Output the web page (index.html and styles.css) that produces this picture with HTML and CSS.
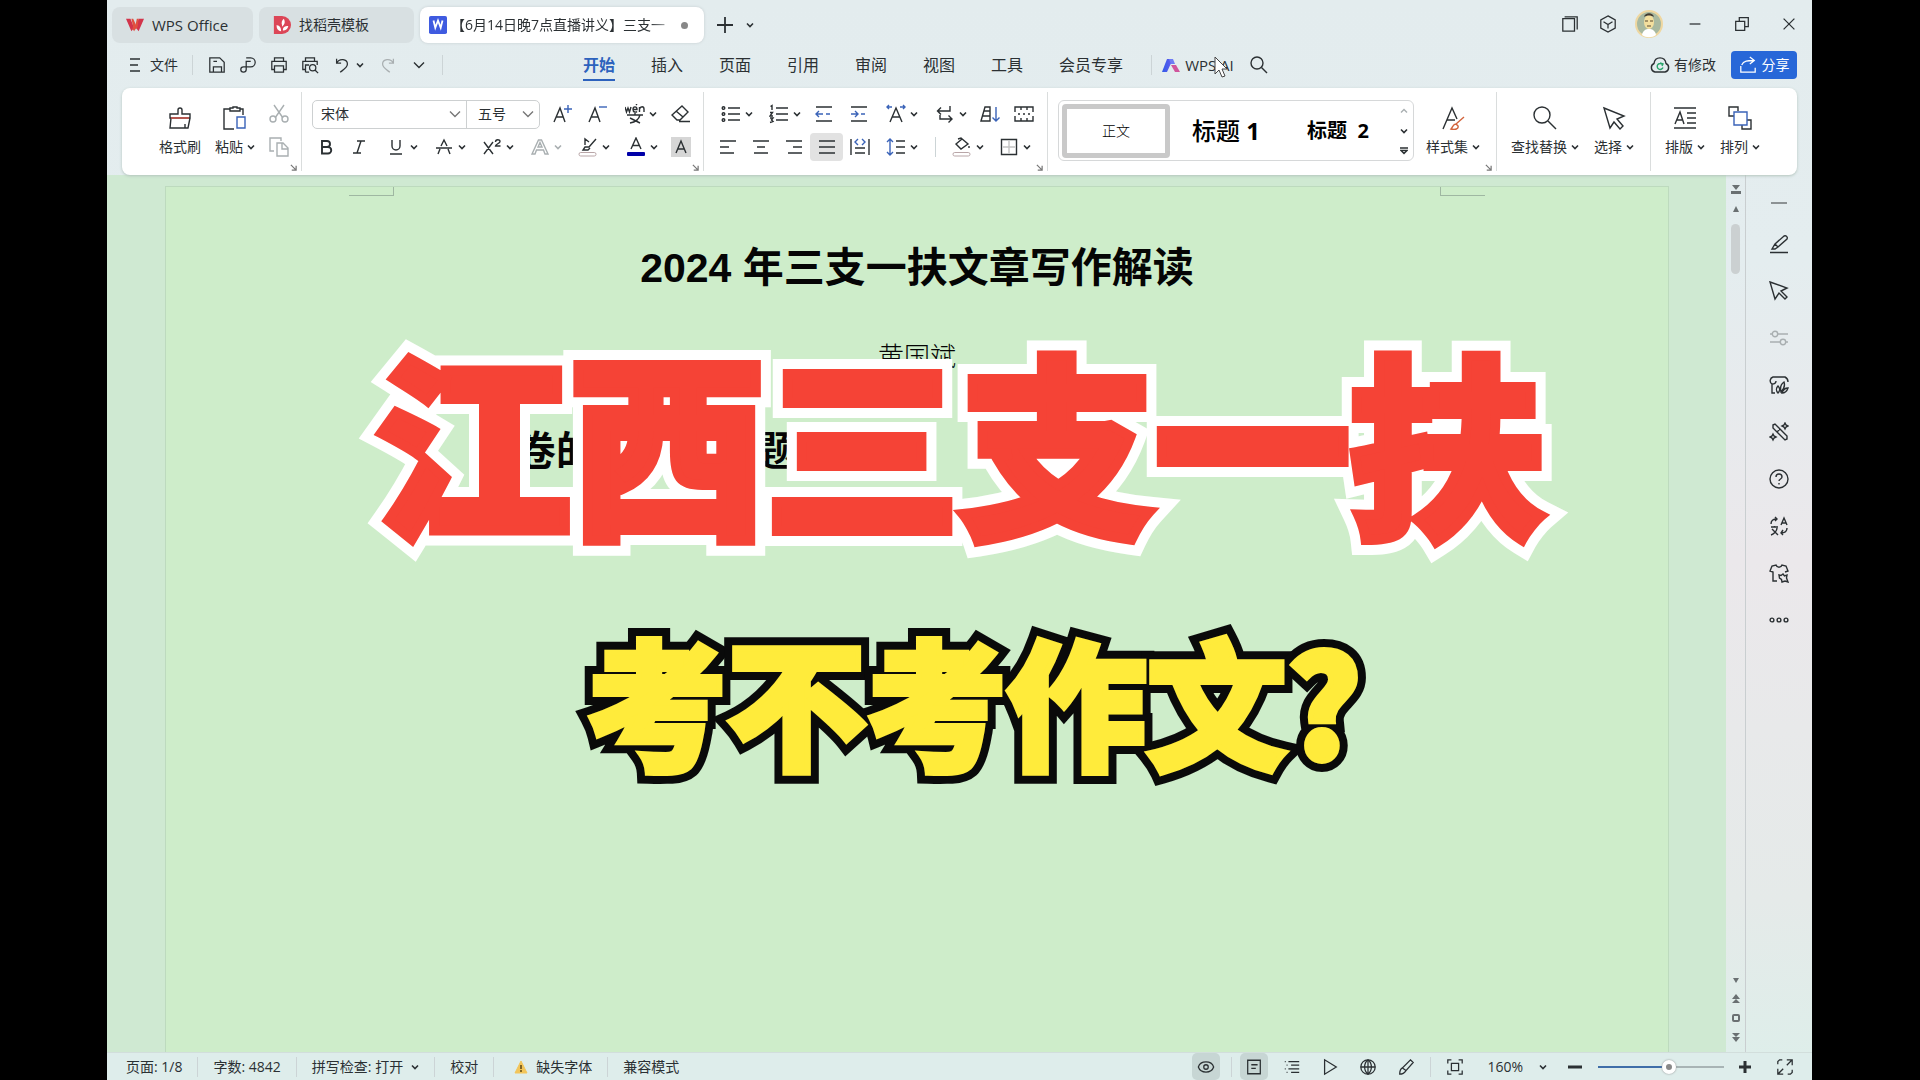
FILE: index.html
```
<!DOCTYPE html>
<html lang="zh-CN">
<head>
<meta charset="utf-8">
<title>WPS Office</title>
<link rel="stylesheet" href="styles.css">
</head>
<body>
<svg class="sprite" aria-hidden="true">
  <symbol id="chev" viewBox="0 0 8 8"><path d="M1 2.5l3 3 3-3" stroke-width="1.6"/></symbol>
  <symbol id="chev-l" viewBox="0 0 12 12"><path d="M1 3.5l5 5 5-5"/></symbol>
  <symbol id="menu" viewBox="0 0 20 20"><path d="M5 4h10M5 10h8M5 16h10"/></symbol>
  <symbol id="save" viewBox="0 0 20 20"><path d="M2 2h11l5 5v11H2zM6 18v-6h9v6M6 6h4"/></symbol>
  <symbol id="pdf" viewBox="0 0 20 20"><path d="M8 2h5a5 5 0 0 1 0 10H5a3 3 0 1 0 3 3V6h5"/></symbol>
  <symbol id="print" viewBox="0 0 20 20"><path d="M5 6V2h10v4M5 15H2V6h16v9h-3M5 11h10v7H5z"/></symbol>
  <symbol id="preview" viewBox="0 0 20 20"><path d="M5 6V2h10v4M5 15H2V6h16v4M5 18v-8h4M5 18h4"/><circle cx="13" cy="13" r="3.5"/><path d="M15.500 15.500L19 19"/></symbol>
  <symbol id="undo" viewBox="0 0 20 20"><path d="M4 3v5h5M4 8c3-6 12-5 12 1 0 4-4 6-8 9"/></symbol>
  <symbol id="redo" viewBox="0 0 20 20"><path d="M16 3v5h-5M16 8C13 2 4 3 4 9c0 4 4 6 8 9"/></symbol>
  <symbol id="search" viewBox="0 0 20 20"><circle cx="8" cy="8" r="6"/><path d="M12.500 12.500L18 18"/></symbol>
  <symbol id="brush" viewBox="0 0 24 24"><path d="M10 8V4a2 2 0 0 1 4 0v4h8v4H2V8zM3 12L2 22h18l2-10M17 22v-4"/><path d="M3 12h18" class="c-red"/></symbol>
  <symbol id="paste" viewBox="0 0 24 24"><path d="M7 3H1v20h10M17 3h3v6M7 5V2h3V1h4v1h3v3z"/><path d="M14 11h8v11h-8z" class="c-blue"/></symbol>
  <symbol id="cut" viewBox="0 0 20 20"><path d="M5 1l9 13M15 1L6 14"/><circle cx="4" cy="15" r="3"/><circle cx="16" cy="15" r="3"/></symbol>
  <symbol id="copy" viewBox="0 0 20 20"><path d="M5 14H1V1h11v3M8 6h6l5 5v8H8zM13 6v6h6"/></symbol>
  <symbol id="launch" viewBox="0 0 8 8"><path d="M1 1l6 6M7 2v5H2"/></symbol>
  <symbol id="a-plus" viewBox="0 0 20 20"><path d="M2 18L8 4l5 14M4 13h7"/><path d="M12 5h8M16 1v8" class="c-blue"/></symbol>
  <symbol id="a-minus" viewBox="0 0 20 20"><path d="M2 18L8 4l5 14M4 13h7"/><path d="M12 3h8" class="c-blue"/></symbol>
  <symbol id="wen" viewBox="0 0 20 20"><path d="M0 3l1.500 5L3 4l1.500 4L6 3M8 5.500h4C12 2 8 2 8 5.500c0 3 3 3 4 2M11 1l1-1M14.500 8V3M14.500 5c1-3 4.500-3 4.500 0v3M2 11h16M10 9v2M5 14l10 5M15 11c-1 4-4 7-10 8"/></symbol>
  <symbol id="eraser" viewBox="0 0 20 20"><path d="M11 2l6 6-8 8H6l-5-5zM5 7l7 6M8 17.500h11"/></symbol>
  <symbol id="bold" viewBox="0 0 20 20"><path d="M6 4h5a3 3 0 0 1 0 6H6zM6 10h6a3 3 0 0 1 0 6.500H6z" stroke-width="1.900"/></symbol>
  <symbol id="italic" viewBox="0 0 20 20"><path d="M8 4h8M4 16h8M12 4L8 16"/></symbol>
  <symbol id="under" viewBox="0 0 20 20"><path d="M6 3v6a4 4 0 0 0 8 0V3M4 17h12"/></symbol>
  <symbol id="strike" viewBox="0 0 20 20"><path d="M7 9l3-6 3 6M2 11h16M6 12l-2 5M14 12l2 5"/></symbol>
  <symbol id="sup" viewBox="0 0 20 20"><path d="M2 5l9 12M11 5L2 17M13.500 5c0-3 4.500-3 4.500-.5 0 2-4.500 2.500-4.500 4.500H18.500"/></symbol>
  <symbol id="a-out" viewBox="0 0 20 20"><path d="M2 17L8.500 3h3L18 17h-3l-1.500-4h-7L5 17zM8 10h4l-2-4.500z"/></symbol>
  <symbol id="hilite" viewBox="0 0 20 20"><path d="M18 2l-7 8H7L5 13h5l2-2M7 8V2l4 3"/><rect x="1" y="15.500" width="17" height="3.500" rx="1.700" class="c-pink"/></symbol>
  <symbol id="a-color" viewBox="0 0 20 20"><path d="M5 12L10 1l5 11M7 8.500h6"/><rect x="1" y="15" width="18" height="4" rx="1" class="f-navy"/></symbol>
  <symbol id="a-bg" viewBox="0 0 20 20"><rect width="20" height="20" class="f-grey"/><path d="M5 16l5-12 5 12M7 12h6"/></symbol>
  <symbol id="bullets" viewBox="0 0 20 20"><path d="M7 4h12M7 10h12M7 16h12"/><circle cx="2.500" cy="4" r="1.300"/><circle cx="2.500" cy="10" r="1.300"/><circle cx="2.500" cy="16" r="1.300"/></symbol>
  <symbol id="numbers" viewBox="0 0 20 20"><path d="M7 4h12M7 10h12M7 16h12M1.500 2.500L3 1.500V6M1 8.500h2.500L1 12h3M1 14h3l-1.500 2L4 17.500 1 18.500"/></symbol>
  <symbol id="outdent" viewBox="0 0 20 20"><path d="M2 3h16M2 17h16"/><path d="M9 10H2M5 7l-3 3 3 3M12 10h4" class="c-blue"/></symbol>
  <symbol id="indent" viewBox="0 0 20 20"><path d="M2 3h16M2 17h16"/><path d="M2 10h7M6 7l3 3-3 3M12 10h4" class="c-blue"/></symbol>
  <symbol id="a-wide" viewBox="0 0 20 20"><path d="M4 18l6-14 6 14M6 13h8"/><path d="M6 3H1M3 1L1 3l2 2M14 3h5M17 1l2 2-2 2" class="c-blue"/></symbol>
  <symbol id="wrap" viewBox="0 0 20 20"><path d="M15 2v5H3M6 3.500L2.500 7 6 10.500M5 11v4h12M13.500 11.500L17 15l-3.500 3.500"/></symbol>
  <symbol id="sort" viewBox="0 0 20 20"><path d="M1 17L5 3h5v14zM4 7h6M3 12h7"/><path d="M16 3v14M12.500 13.500L16 17l3.500-3.500" class="c-blue"/></symbol>
  <symbol id="cells" viewBox="0 0 20 20"><path d="M1 8V3h18v5M1 12v5h18v-5M7 3v3M13 3v3M7 17v-3M13 17v-3M4 10h2M9 10h2M14 10h2"/></symbol>
  <symbol id="al" viewBox="0 0 20 20"><path d="M2 4h16M2 10h9M2 16h14"/></symbol>
  <symbol id="ac" viewBox="0 0 20 20"><path d="M2 4h16M6 10h8M3 16h14"/></symbol>
  <symbol id="ar" viewBox="0 0 20 20"><path d="M2 4h16M9 10h9M4 16h14"/></symbol>
  <symbol id="aj" viewBox="0 0 20 20"><path d="M2 4h16M2 10h16M2 16h16"/></symbol>
  <symbol id="dist" viewBox="0 0 20 20"><path d="M1 2v16M19 2v16M5 11h10M5 16h10"/><path d="M8 2L5 5l3 3M12 2l3 3-3 3" class="c-blue"/></symbol>
  <symbol id="spacing" viewBox="0 0 20 20"><path d="M10 4h9M10 10h9M10 16h9"/><path d="M4 2v16M1 5l3-3 3 3M1 15l3 3 3-3" class="c-blue"/></symbol>
  <symbol id="bucket" viewBox="0 0 20 20"><path d="M6 2l3-1 7 6-7 5-5-5 6-5M17 9v2"/><rect x="1" y="15.500" width="17" height="3.500" rx="1.700" class="c-pink"/></symbol>
  <symbol id="border" viewBox="0 0 20 20"><path d="M2.500 2.500h15v15h-15z"/><path d="M10 4v12M4 10h12" class="c-light"/></symbol>
  <symbol id="styleset" viewBox="0 0 24 24"><path d="M2 23L11 2l5 11M6 14h8"/><path d="M23 11l-8 7M15 18c-3 0-3 3-5 5 4 1 8 0 7-3z" class="c-orange"/></symbol>
  <symbol id="find" viewBox="0 0 24 24"><circle cx="9" cy="9" r="8"/><path d="M15 15l8 8"/></symbol>
  <symbol id="pick" viewBox="0 0 24 24"><path d="M2 2l20 8-7 3 6 7-3 3-6-7-4 6z"/></symbol>
  <symbol id="typeset" viewBox="0 0 24 24"><path d="M1 2h22M1 22h22M2 18L7 6l4 12M4 14h5M14 7h9M14 12h9M14 17h9"/></symbol>
  <symbol id="arrange" viewBox="0 0 24 24"><path d="M6 10H1V1h9v4M19 14h4v9h-9v-4"/><path d="M6 6h13v13H6z" class="c-blue"/></symbol>
  <symbol id="stack" viewBox="0 0 20 20"><path d="M2 4h13v14H2zM4 2h14v14"/></symbol>
  <symbol id="cube" viewBox="0 0 20 20"><path d="M10 1l8 4.500v9L10 19l-8-4.500v-9zM5 7.500l5 3 5-3M10 10.500V15"/></symbol>
  <symbol id="min" viewBox="0 0 20 20"><path d="M4 10h12"/></symbol>
  <symbol id="restore" viewBox="0 0 20 20"><path d="M3 7h10v10H3zM7 7V3h10v10h-4"/></symbol>
  <symbol id="close" viewBox="0 0 20 20"><path d="M4 4l12 12M16 4L4 16"/></symbol>
  <symbol id="plus" viewBox="0 0 20 20"><path d="M10 2v16M2 10h16" stroke-width="1.800"/></symbol>
  <symbol id="cloud" viewBox="0 0 20 20"><path d="M5 17a4.500 4.500 0 0 1-1-8.500C5 1 15 1 16 8.500a4.500 4.500 0 0 1-1 8.500z"/><path d="M12.500 9.500a3 3 0 1 0 .5 3M10 8l3 1-1 2" class="c-green"/></symbol>
  <symbol id="share" viewBox="0 0 20 20"><path d="M2 11v7h16v-5M3 10c2-5 7-5 13-5M12 1l5 4-5 4"/></symbol>
  <symbol id="pen" viewBox="0 0 20 20"><path d="M1 18.500h18M3 15l3-5 9-8c2-1 4 1 3 3l-9 8-3 2zM6 10l3 3"/></symbol>
  <symbol id="cursor" viewBox="0 0 20 20"><path d="M1 1l17 6-6 3 6 6-2 2-6-6-4 6z"/></symbol>
  <symbol id="sliders" viewBox="0 0 20 20"><path d="M1 6h2M9 6h10M1 14h10M17 14h2"/><circle cx="6" cy="6" r="2.700"/><circle cx="14" cy="14" r="2.700"/></symbol>
  <symbol id="leaf" viewBox="0 0 20 20"><path d="M6 18H3V9C0 7 1 3 4 2h12c2 1 3 3 3 5M3 9c2 0 4-1 4-3M9 18c-2-2-2-5 0-7 2 2 2 5 0 7zM12 17c-1-4 0-8 3-10 1 3 0 7-3 10zM13 18c1-3 3-5 6-5-1 3-3 5-6 5z"/></symbol>
  <symbol id="wand" viewBox="0 0 20 20"><path d="M4 3l2-1 12 12v3l-2 1L4 6zM8 10l3-3M16 1l1 2 2 1-2 1-1 2-1-2-2-1 2-1zM4 12l1 2 2 1-2 1-1 2-1-2-2-1 2-1z"/></symbol>
  <symbol id="help" viewBox="0 0 20 20"><circle cx="10" cy="10" r="9"/><path d="M7 8c0-4 6-4 6 0 0 2-3 2-3 4M10 14v1.500"/></symbol>
  <symbol id="trans" viewBox="0 0 20 20"><path d="M2 8c0-4 3-5 6-5M6 1l2 2-2 2M12 9l3-7 3 7M13 7h4M18 12c0 4-3 5-6 5M14 14l-2 3 2 2M2 11h7M5.500 10v1M3 13l6 6M8 12c0 3-3 6-6 7"/></symbol>
  <symbol id="shirt" viewBox="0 0 20 20"><path d="M8 18H4V9L1 8l2-5 4-1c1 3 5 3 6 0l4 1 2 5-3 1"/><path d="M10 12l2 .5L14 11l1.500 2 2.500-1-.5 3 1.500 4-3-1-3 1-.5-2.500-2-1.500z"/></symbol>
  <symbol id="dots" viewBox="0 0 20 20"><circle cx="3" cy="10" r="1.900"/><circle cx="10" cy="10" r="1.900"/><circle cx="17" cy="10" r="1.900"/></symbol>
  <symbol id="eye" viewBox="0 0 20 20"><path d="M1.500 10C4 2.500 16 2.500 18.500 10 16 17.500 4 17.500 1.500 10z"/><circle cx="10" cy="10" r="2.500"/></symbol>
  <symbol id="doc" viewBox="0 0 20 20"><path d="M3 2.500h14v15H3zM7 7.500h7M7 11.500h5"/></symbol>
  <symbol id="outline" viewBox="0 0 20 20"><path d="M2 4h1M6 4h12M9 8h9M2 12h1M6 12h12M9 16h9M4 8h1M4 16h1"/></symbol>
  <symbol id="play" viewBox="0 0 20 20"><path d="M4 2v16l13-8z"/></symbol>
  <symbol id="globe" viewBox="0 0 20 20"><circle cx="10" cy="10" r="8"/><path d="M10 2v16M2 10h16M10 2c-5 4-5 12 0 16 5-4 5-12 0-16"/></symbol>
  <symbol id="quill" viewBox="0 0 20 20"><path d="M3 18c0-3 1-6 3-7l9-9 3 3-8 9c-2 3-4 4-7 4zM6 11l4 3"/></symbol>
  <symbol id="fit" viewBox="0 0 20 20"><path d="M2 6V2h4M14 2h4v4M18 14v4h-4M6 18H2v-4M6 6h8v8H6z"/></symbol>
  <symbol id="full" viewBox="0 0 20 20"><path d="M12 2h6v6M18 2l-6 6M8 18H2v-6M2 18l6-6M2 7V4l2-2h3M18 13v3l-2 2h-3"/></symbol>
</svg>

<div class="app">
  <header class="titlebar">
    <nav class="tabs" aria-label="文档标签">
      <button class="tab tab-home"><svg class="logo" viewBox="0 0 20 16"><path d="M0 1h5l4 10L6 15zM14 1h6l-6 14-3-4z" fill="#d2344b"/><path d="M6 1h2l4 9-3 5-2-3 1-2z" fill="#e0503f"/><path d="M12 1h2l-1 9-2 3-1-2z" fill="#e0503f"/></svg>WPS Office</button>
      <button class="tab tab-store"><svg class="logo" viewBox="0 0 20 20"><path d="M1 0h9a10 10 0 0 1 0 20H1z" fill="#dc4657"/><path d="M9 17c-4-1-5-3-5-7 4 1 5 3 5 7zM10 10c-1-3 0-5 2-7 2 4 1 6-2 9zM11 16c0-4 2-5 6-5-1 4-3 5-6 5z" fill="#fff"/></svg>找稻壳模板</button>
      <button class="tab tab-doc active"><svg class="logo" viewBox="0 0 20 20"><rect width="20" height="20" rx="2" fill="#3f5be0"/><path d="M5 5l2 8 3-8 3 8 2-8" stroke="#fff" stroke-width="2" fill="none"/></svg><span class="tab-name">【6月14日晚7点直播讲义】三支一</span><i class="dot"></i></button>
      <button class="ic" aria-label="新建"><svg class="i"><use href="#plus"/></svg></button>
      <button class="ic-xs" aria-label="标签列表"><svg class="arr"><use href="#chev"/></svg></button>
    </nav>
    <div class="window">
      <button aria-label="窗口"><svg class="i18"><use href="#stack"/></svg></button>
      <button aria-label="应用"><svg class="i18"><use href="#cube"/></svg></button>
      <button class="user" aria-label="账号"><svg class="avatar" viewBox="0 0 28 28"><circle cx="14" cy="14" r="13" fill="#a9b9a0" stroke="#efd7a0" stroke-width="2"/><path d="M7 25c1-5 4-6 7-6s6 1 7 6c-4 3-10 3-14 0z" fill="#fff"/><ellipse cx="14" cy="12" rx="5" ry="7" fill="#f4df9e"/><path d="M9 7c1-5 9-5 10 0-3-2-7-2-10 0z" fill="#443c30"/><path d="M10 11h3M15 11h3M12 16h4" stroke="#5a4a33"/></svg></button>
      <button class="wide" aria-label="最小化"><svg class="i18"><use href="#min"/></svg></button>
      <button class="wide" aria-label="还原"><svg class="i18"><use href="#restore"/></svg></button>
      <button class="wide" aria-label="关闭"><svg class="i18"><use href="#close"/></svg></button>
    </div>
  </header>

  <div class="menubar">
    <div class="quick">
      <button class="file"><svg class="i"><use href="#menu"/></svg>文件</button>
      <i class="sep"></i>
      <button class="q first" aria-label="保存"><svg class="i18"><use href="#save"/></svg></button>
      <button class="q" aria-label="输出PDF"><svg class="i18"><use href="#pdf"/></svg></button>
      <button class="q" aria-label="打印"><svg class="i18"><use href="#print"/></svg></button>
      <button class="q" aria-label="打印预览"><svg class="i18"><use href="#preview"/></svg></button>
      <button class="undo" aria-label="撤销"><svg class="i18"><use href="#undo"/></svg><svg class="arr"><use href="#chev"/></svg></button>
      <button class="q pale" aria-label="恢复"><svg class="i18"><use href="#redo"/></svg></button>
      <button class="q" aria-label="更多"><svg class="arr-l"><use href="#chev-l"/></svg></button>
      <i class="sep"></i>
    </div>
    <nav class="menu" aria-label="功能区">
      <a class="on" href="#">开始</a><a href="#">插入</a><a href="#">页面</a><a href="#">引用</a><a href="#">审阅</a><a href="#">视图</a><a href="#">工具</a><a href="#">会员专享</a>
      <i class="sep"></i>
      <a class="ai" href="#"><svg class="i18" viewBox="0 0 18 14"><defs><linearGradient id="g" x2="1"><stop stop-color="#2f5be8"/><stop offset="1" stop-color="#6a5df0"/></linearGradient></defs><path d="M0 14L5 1h6L5 14z" fill="url(#g)"/><path d="M7 1h4l2 5H9z" fill="#6f7cf5"/><path d="M9 7h5l4 7h-5z" fill="#d0559c"/></svg>WPS AI</a>
      <button class="ic" aria-label="搜索"><svg class="i"><use href="#search"/></svg></button>
      <svg class="pointer" viewBox="0 0 14 22"><path d="M1 1v17l4-4 3 7 3-1-3-7h5z" fill="#fff" stroke="#444"/></svg>
    </nav>
    <div class="account">
      <button class="changed"><svg class="i"><use href="#cloud"/></svg>有修改</button>
      <button class="share"><svg class="i18"><use href="#share"/></svg>分享</button>
    </div>
  </div>

  <section class="ribbon" aria-label="开始">
    <div class="group clip">
      <button class="big"><svg class="i24"><use href="#brush"/></svg><span>格式刷</span></button>
      <button class="big"><svg class="i24"><use href="#paste"/></svg><span>粘贴<svg class="arr"><use href="#chev"/></svg></span></button>
      <div class="stack pale">
        <button aria-label="剪切"><svg class="i"><use href="#cut"/></svg></button>
        <button aria-label="复制"><svg class="i"><use href="#copy"/></svg></button>
      </div>
      <svg class="launch"><use href="#launch"/></svg>
    </div>
    <div class="group font">
      <div class="row">
        <div class="combo">
          <button class="font-name">宋体<svg class="arr-l"><use href="#chev-l"/></svg></button>
          <button class="font-size">五号<svg class="arr-l"><use href="#chev-l"/></svg></button>
        </div>
        <button class="s" aria-label="增大字号"><svg class="i"><use href="#a-plus"/></svg></button>
        <button class="s" aria-label="减小字号"><svg class="i"><use href="#a-minus"/></svg></button>
        <button class="l" aria-label="拼音"><svg class="i"><use href="#wen"/></svg><svg class="arr"><use href="#chev"/></svg></button>
        <button class="s" aria-label="清除格式"><svg class="i"><use href="#eraser"/></svg></button>
      </div>
      <div class="row">
        <button class="s" aria-label="加粗"><svg class="i"><use href="#bold"/></svg></button>
        <button class="s" aria-label="倾斜"><svg class="i"><use href="#italic"/></svg></button>
        <button class="l" aria-label="下划线"><svg class="i"><use href="#under"/></svg><svg class="arr"><use href="#chev"/></svg></button>
        <button class="l" aria-label="删除线"><svg class="i"><use href="#strike"/></svg><svg class="arr"><use href="#chev"/></svg></button>
        <button class="l" aria-label="上标"><svg class="i"><use href="#sup"/></svg><svg class="arr"><use href="#chev"/></svg></button>
        <button class="l pale" aria-label="文字效果"><svg class="i"><use href="#a-out"/></svg><svg class="arr"><use href="#chev"/></svg></button>
        <button class="l" aria-label="突出显示"><svg class="i"><use href="#hilite"/></svg><svg class="arr"><use href="#chev"/></svg></button>
        <button class="l" aria-label="字体颜色"><svg class="i"><use href="#a-color"/></svg><svg class="arr"><use href="#chev"/></svg></button>
        <button class="s" aria-label="字符底纹"><svg class="i"><use href="#a-bg"/></svg></button>
      </div>
      <svg class="launch"><use href="#launch"/></svg>
    </div>
    <div class="group para">
      <div class="row">
        <button class="l" aria-label="项目符号"><svg class="i"><use href="#bullets"/></svg><svg class="arr"><use href="#chev"/></svg></button>
        <button class="l" aria-label="编号"><svg class="i"><use href="#numbers"/></svg><svg class="arr"><use href="#chev"/></svg></button>
        <button class="s" aria-label="减少缩进"><svg class="i"><use href="#outdent"/></svg></button>
        <button class="s" aria-label="增加缩进"><svg class="i"><use href="#indent"/></svg></button>
        <button class="l" aria-label="中文版式"><svg class="i"><use href="#a-wide"/></svg><svg class="arr"><use href="#chev"/></svg></button>
        <button class="l" aria-label="换行"><svg class="i"><use href="#wrap"/></svg><svg class="arr"><use href="#chev"/></svg></button>
        <button class="s" aria-label="排序"><svg class="i"><use href="#sort"/></svg></button>
        <button class="s" aria-label="制表"><svg class="i"><use href="#cells"/></svg></button>
      </div>
      <div class="row align-row">
        <button class="s" aria-label="左对齐"><svg class="i"><use href="#al"/></svg></button>
        <button class="s" aria-label="居中"><svg class="i"><use href="#ac"/></svg></button>
        <button class="s" aria-label="右对齐"><svg class="i"><use href="#ar"/></svg></button>
        <button class="s pressed" aria-label="两端对齐"><svg class="i"><use href="#aj"/></svg></button>
        <button class="s" aria-label="分散对齐"><svg class="i"><use href="#dist"/></svg></button>
        <button class="l" aria-label="行距"><svg class="i"><use href="#spacing"/></svg><svg class="arr"><use href="#chev"/></svg></button>
        <i class="sep"></i>
        <button class="l" aria-label="底纹"><svg class="i"><use href="#bucket"/></svg><svg class="arr"><use href="#chev"/></svg></button>
        <button class="l" aria-label="边框"><svg class="i"><use href="#border"/></svg><svg class="arr"><use href="#chev"/></svg></button>
      </div>
      <svg class="launch"><use href="#launch"/></svg>
    </div>
    <div class="group styles">
      <div class="gallery">
        <button class="style body-style">正文</button>
        <button class="style h1-style">标题&nbsp; <b>1</b></button>
        <button class="style h2-style">标题&nbsp; 2</button>
        <div class="gallery-nav">
          <svg class="arr pale" viewBox="0 0 8 8"><path d="M1 5.500l3-3 3 3"/></svg>
          <svg class="arr"><use href="#chev"/></svg>
          <svg class="arr" viewBox="0 0 8 8"><path d="M0 1h8M1 3.500l3 3 3-3z"/></svg>
        </div>
      </div>
      <button class="big"><svg class="i24"><use href="#styleset"/></svg><span>样式集<svg class="arr"><use href="#chev"/></svg></span></button>
      <svg class="launch"><use href="#launch"/></svg>
    </div>
    <div class="group tools">
      <button class="big"><svg class="i24"><use href="#find"/></svg><span>查找替换<svg class="arr"><use href="#chev"/></svg></span></button>
      <button class="big"><svg class="i24"><use href="#pick"/></svg><span>选择<svg class="arr"><use href="#chev"/></svg></span></button>
    </div>
    <div class="group tools last">
      <button class="big"><svg class="i24"><use href="#typeset"/></svg><span>排版<svg class="arr"><use href="#chev"/></svg></span></button>
      <button class="big"><svg class="i24"><use href="#arrange"/></svg><span>排列<svg class="arr"><use href="#chev"/></svg></span></button>
    </div>
  </section>

  <div class="work">
    <main class="canvas">
      <article class="page">
        <div class="marks"><i></i><i></i></div>
        <h1>2024 年三支一扶文章写作解读</h1>
        <p class="author">黄国斌</p>
        <h2>一、试卷的文章写作题</h2>
      </article>
    </main>
    <div class="scroll">
      <svg class="tri" viewBox="0 0 10 10"><path d="M1 0h8L5 5zM0 6h10v3H0z"/></svg>
      <svg class="tri" viewBox="0 0 10 10"><path d="M5 2l3 6H2z"/></svg>
      <i class="thumb"></i>
      <svg class="tri push" viewBox="0 0 10 10"><path d="M2 3h6L5 8z"/></svg>
      <svg class="tri" viewBox="0 0 10 10"><path d="M5 0l4 5H1zM5 5l4 4H1z"/></svg>
      <svg class="tri" viewBox="0 0 10 10"><rect x="2" y="2" width="6" height="6" rx="1" fill="none" stroke="#6a7072" stroke-width="2"/></svg>
      <svg class="tri" viewBox="0 0 10 10"><path d="M1 1h8L5 5zM1 5h8l-4 5z"/></svg>
    </div>
    <aside class="side">
      <button class="collapse" aria-label="收起"><i></i></button>
      <button aria-label="画笔"><svg class="i"><use href="#pen"/></svg></button>
      <button aria-label="选择"><svg class="i"><use href="#cursor"/></svg></button>
      <button class="pale" aria-label="属性"><svg class="i"><use href="#sliders"/></svg></button>
      <button aria-label="稻壳"><svg class="i"><use href="#leaf"/></svg></button>
      <button aria-label="工具箱"><svg class="i"><use href="#wand"/></svg></button>
      <button aria-label="帮助"><svg class="i"><use href="#help"/></svg></button>
      <button aria-label="翻译"><svg class="i"><use href="#trans"/></svg></button>
      <button aria-label="皮肤"><svg class="i"><use href="#shirt"/></svg></button>
      <button aria-label="更多"><svg class="i"><use href="#dots"/></svg></button>
    </aside>
  </div>

  <footer class="status">
    <div class="info">
      <span>页面: 1/8</span><i class="sep"></i>
      <span>字数: 4842</span><i class="sep"></i>
      <span>拼写检查: 打开<svg class="arr"><use href="#chev"/></svg></span><i class="sep"></i>
      <span>校对</span><i class="sep"></i>
      <span class="warn"><svg viewBox="0 0 14 14"><path d="M7 1l6 12H1z" fill="#f2c55a" stroke="#f2c55a"/><path d="M7 5v4M7 10v2" stroke="#5a4516" stroke-width="1.500"/></svg>缺失字体</span><i class="sep"></i>
      <span>兼容模式</span>
    </div>
    <div class="views">
      <button class="v on" aria-label="护眼模式"><svg class="i18"><use href="#eye"/></svg></button>
      <i class="sep"></i>
      <button class="v on" aria-label="页面视图"><svg class="i18"><use href="#doc"/></svg></button>
      <button class="v" aria-label="大纲"><svg class="i18"><use href="#outline"/></svg></button>
      <button class="v" aria-label="阅读"><svg class="i18"><use href="#play"/></svg></button>
      <button class="v" aria-label="Web版式"><svg class="i18"><use href="#globe"/></svg></button>
      <button class="v" aria-label="写作模式"><svg class="i18"><use href="#quill"/></svg></button>
      <i class="sep"></i>
      <button class="v" aria-label="适合页面"><svg class="i18"><use href="#fit"/></svg></button>
      <button class="percent">160%<svg class="arr"><use href="#chev"/></svg></button>
      <button class="step" aria-label="缩小"><svg class="i14" viewBox="0 0 14 14"><path d="M0 7h14"/></svg></button>
      <input class="zoom" type="range" min="0" max="100" value="57" aria-label="显示比例">
      <button class="step" aria-label="放大"><svg class="i14" viewBox="0 0 14 14"><path d="M1 7h12M7 1v12"/></svg></button>
      <button class="v" aria-label="全屏"><svg class="i18"><use href="#full"/></svg></button>
    </div>
  </footer>
</div>

<div class="caption">
  <p class="cap-red" data-text="江西三支一扶">江西三支一扶</p>
  <p class="cap-yellow" data-text="考不考作文?">考不考作文?</p>
</div>
</body>
</html>
```
FILE: styles.css
```
* { box-sizing: border-box; }

body {
  margin: 0;
  background: #000;
  color: #2b3033;
  font: 14px/20px "Open Sans", "Noto Sans CJK SC", sans-serif;
  position: relative;
  overflow: hidden;
}

button {
  display: flex;
  align-items: center;
  justify-content: center;
  padding: 0;
  border: 0;
  background: none;
  color: inherit;
  font: inherit;
  white-space: nowrap;
}

a { color: inherit; text-decoration: none; }
p, h1, h2 { margin: 0; }

.sprite { position: absolute; width: 0; height: 0; }
svg { flex: none; }
use, .arr, .i14 { fill: none; stroke: currentColor; stroke-width: 1.4px; }
.i { width: 20px; height: 20px; }
.i18 { width: 18px; height: 18px; }
.i24 { width: 24px; height: 24px; }
.i14 { width: 14px; height: 14px; stroke-width: 3px; }
.arr { width: 8px; height: 8px; }
.arr-l { width: 12px; height: 12px; }
.c-blue { stroke: #3a63b8; }
.c-red { stroke: #d9534a; }
.c-orange { stroke: #d2643c; }
.c-green { stroke: #2aa56c; }
.c-pink { stroke: #b9a6a8; stroke-width: 1px; }
.c-light { stroke: #c4c4c4; }
.f-navy { fill: #0000a8; stroke: none; }
.f-grey { fill: #d6d6d6; stroke: none; }
.pale { color: #a9afb1; }

.sep {
  width: 1px;
  height: 20px;
  background: #ccd4d6;
  flex: none;
}

.app {
  display: flex;
  flex-direction: column;
  height: 100vh;
  margin: 0 108px 0 107px;
  background: linear-gradient(#e3ecee 0, #e4edef 260px, #ebe8eb 560px, #e5eae9 900px, #deeeea 1060px);
}

/* Title bar */
.titlebar {
  display: flex;
  justify-content: space-between;
  height: 48px;
}
.tabs { display: flex; align-items: center; padding: 2px 0 0 5px; }
.tab {
  height: 36px;
  justify-content: flex-start;
  gap: 8px;
  margin-right: 6px;
  padding: 0 14px;
  border-radius: 8px;
  background: #d8e0e2;
}
.tab-home { width: 141px; font-size: 15px; }
.tab-store { width: 155px; }
.tab-doc { width: 284px; padding: 0 16px 0 9px; gap: 4px; }
.tab.active { background: #fff; box-shadow: 0 0 3px #c3cbce; }
.logo { width: 18px; height: 18px; }
.tab-name {
  flex: 1;
  overflow: hidden;
  text-align: left;
  mask-image: linear-gradient(90deg, #000 88%, transparent);
}
.dot { width: 7px; height: 7px; border-radius: 50%; background: #888; }
.ic { width: 30px; }
.ic-xs { width: 20px; }
.window { display: flex; align-items: center; }
.window button { width: 38px; }
.window .user { width: 44px; }
.window .wide { width: 47px; }
.avatar { width: 28px; height: 28px; }

/* Menu bar */
.menubar {
  display: grid;
  grid-template-columns: 476px 1fr auto;
  align-items: center;
  height: 34px;
  padding-right: 15px;
}
.quick { display: flex; align-items: center; padding-left: 18px; }
.file { gap: 5px; margin-right: 14px; }
.q { width: 31px; }
.first { margin-left: 8px; }
.undo { width: 47px; gap: 5px; }
.quick .sep:last-child { margin-left: 8px; }
.menu {
  display: flex;
  align-items: center;
  gap: 36px;
  font-size: 16px;
  position: relative;
}
.menu a { padding: 5px 0 4px; border-bottom: 2px solid transparent; white-space: nowrap; }
.menu a.on { color: #2d62bd; font-weight: 700; border-color: #2d62bd; }
.menu .sep { margin: 0 -26px 0 -8px; }
.menu .ai { display: flex; align-items: center; gap: 5px; font-size: 15px; }
.menu .ic { margin-left: -26px; }
.pointer { position: absolute; left: 631px; top: 6px; width: 14px; height: 22px; }
.account { display: flex; align-items: center; gap: 15px; }
.changed { gap: 4px; }
.share {
  gap: 5px;
  width: 66px;
  height: 28px;
  border-radius: 4px;
  background: #2767d8;
  color: #fff;
}

/* Ribbon */
.ribbon {
  display: flex;
  height: 87px;
  margin: 6px 15px 0;
  padding: 4px 0;
  border-radius: 8px;
  background: #fff;
  box-shadow: 0 1px 3px #b3c4bd;
  position: relative;
  z-index: 1;
}
.group {
  display: flex;
  align-items: center;
  padding-bottom: 2px;
  border-right: 1px solid #dadddd;
  position: relative;
}
.launch {
  position: absolute;
  right: 4px;
  bottom: 0;
  width: 7px;
  height: 7px;
  color: #777;
}
.big { flex-direction: column; gap: 8px; }
.big span { display: flex; align-items: center; gap: 4px; height: 18px; }
.clip { width: 180px; padding-left: 37px; }
.clip .big:first-child { margin-right: 14px; }
.stack { margin-left: 14px; }
.stack button { height: 33px; }
.font, .para { flex-direction: column; justify-content: center; align-items: stretch; padding-left: 7px; }
.font { width: 402px; padding-right: 6px; }
.para { width: 344px; padding-right: 6px; }
.row { display: flex; align-items: center; height: 33px; }
.font .row { justify-content: space-between; }
.para .row { justify-content: space-between; }
.para .align-row { justify-content: flex-start; }
.s { width: 33px; height: 28px; }
.l { width: 47px; height: 28px; gap: 4px; padding-left: 4px; }
.combo {
  display: flex;
  width: 228px;
  height: 29px;
  margin: 0 3px;
  border: 1px solid #cdd0d1;
  border-radius: 5px;
}
.combo button { justify-content: space-between; padding: 0 5px 0 8px; }
.font-name { flex: 1; border-right: 1px solid #cdd0d1; }
.combo .font-size { width: 72px; padding-left: 11px; }
.combo .arr-l { color: #777; }
.pressed { background: #e2e2e2; border-radius: 4px; }
.row .sep { margin: 0 6px 0 12px; }
.styles { width: 449px; padding-left: 10px; }
.gallery {
  display: flex;
  align-items: center;
  width: 356px;
  height: 61px;
  margin-right: 12px;
  padding-left: 3px;
  border: 1px solid #d6d8d9;
  border-radius: 6px;
}
.style { width: 112px; height: 54px; color: #000; }
.body-style { width: 108px; border: 5px solid #c9c9c9; border-radius: 4px; font-weight: 300; }
.h1-style { font-size: 24px; font-weight: 500; }
.h2-style { font-size: 20px; font-weight: 700; }
.gallery-nav { display: flex; flex-direction: column; align-items: center; gap: 12px; flex: 1; }
.tools { gap: 15px; padding: 0 16px 2px 14px; }
.last { border: 0; }

/* Document area */
.work { display: flex; flex: 1; min-height: 0; }
.canvas { flex: 1; background: #cfe9d2; padding: 11px 57px 0 58px; }
.page {
  height: 100%;
  background: #ceedca;
  border: 1px solid #bddabe;
  border-bottom: 0;
  color: #050505;
  padding: 0 183px;
}
.marks { display: flex; justify-content: space-between; height: 9px; }
.marks i { width: 45px; border: solid #9fb7a2; border-width: 0 1px 1px 0; }
.marks i:last-child { border-width: 0 0 1px 1px; }
.page h1 {
  margin-top: 42px;
  text-align: center;
  font: 700 41px/60px "Liberation Sans", "Noto Sans CJK SC", sans-serif;
}
.author { margin-top: 38px; text-align: center; font-size: 26px; line-height: 40px; font-weight: 300; }
.page h2 { margin: 44px 0 0 47px; font-size: 40px; line-height: 60px; }
.scroll {
  display: flex;
  flex-direction: column;
  align-items: center;
  gap: 9px;
  width: 20px;
  padding: 10px 0;
  border-right: 1px solid #c9ced0;
}
.tri { width: 10px; height: 10px; fill: #6a7072; }
.thumb { width: 9px; height: 50px; margin-top: 1px; border-radius: 5px; background: #cbd0d1; }
.push { margin-top: auto; }
.side { width: 66px; padding-top: 10px; }
.side button { width: 100%; height: 47px; }
.side .collapse { height: 35px; }
.collapse i { width: 16px; height: 2px; background: #8c9294; }

/* Status bar */
.status {
  display: flex;
  justify-content: space-between;
  height: 28px;
  padding: 0 8px 0 19px;
  border-top: 1px solid #d2dedc;
  background: #deedeb;
}
.info, .info span, .views { display: flex; align-items: center; }
.info { gap: 15px; }
.info span { gap: 8px; white-space: nowrap; }
.info .warn { padding-left: 5px; }
.warn svg { width: 14px; height: 14px; }
.v { width: 38px; height: 27px; }
.v.on { width: 28px; border-radius: 5px; background: #c7d6d4; }
.on + .v { margin-left: 5px; }
.views .v + .sep { margin: 0 5px; }
.views .on + .sep { margin: 0 8px 0 11px; }
.percent { gap: 16px; margin: 0 5px 0 13px; }
.step { width: 46px; }
.zoom + .step { width: 42px; }
.zoom {
  appearance: none;
  width: 126px;
  height: 16px;
  margin: 0;
  background: linear-gradient(90deg, #3f6ea8 57%, #a8b4b5 57%) center / 100% 2px no-repeat;
}
.zoom::-webkit-slider-thumb {
  appearance: none;
  width: 14px;
  height: 14px;
  border: 4px solid #fff;
  border-radius: 50%;
  background: #888;
  box-shadow: 0 0 2px #888;
}

/* Video caption lying over the window */
.caption {
  position: absolute;
  inset: 0;
  z-index: 2;
  padding-top: 328px;
  text-align: center;
  font-family: "Noto Sans CJK SC", sans-serif;
  font-weight: 900;
  white-space: nowrap;
  pointer-events: none;
}
.caption p { position: relative; -webkit-text-stroke-color: currentColor; }
.caption p::before {
  content: attr(data-text);
  position: absolute;
  inset: 0;
  z-index: -1;
}
.cap-red { color: #f54336; font-size: 195px; line-height: 220px; -webkit-text-stroke-width: 10px; }
.cap-red::before { color: #fff; -webkit-text-stroke: 30px #fff; }
.cap-yellow { margin: 70px 0 0 28px; color: #ffeb3b; font-size: 140px; line-height: 160px; -webkit-text-stroke-width: 6px; }
.cap-yellow::before { color: #0a0a0a; -webkit-text-stroke: 22px #0a0a0a; }
```
